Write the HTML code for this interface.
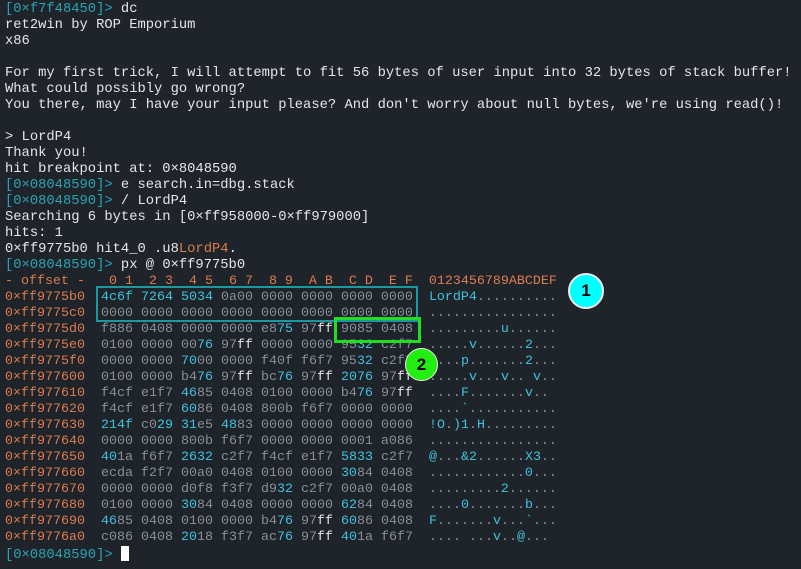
<!DOCTYPE html>
<html><head><meta charset="utf-8"><style>
html,body{margin:0;padding:0;background:#1f232a;width:801px;height:569px;overflow:hidden}
pre{margin:0;padding:2px 0 0 5px;font-family:"Liberation Mono","DejaVu Sans Mono",monospace;font-size:13.8px;line-height:16px;color:#e4e6ea;white-space:pre}
pre.h{padding-top:0;font-size:13.33px}
.c{color:#3cc4dc}.p{color:#2aa4b4}.g{color:#8a8f99}.w{color:#e4e6ea}.o{color:#d97d4e}
.box{position:absolute}
.cur{display:inline-block;width:8px;height:15px;background:#fff;vertical-align:-3px}
</style></head><body>
<pre><span class="p">[0×f7f48450]&gt;</span> dc
ret2win by ROP Emporium
x86

For my first trick, I will attempt to fit 56 bytes of user input into 32 bytes of stack buffer!
What could possibly go wrong?
You there, may I have your input please? And don't worry about null bytes, we're using read()!

&gt; LordP4
Thank you!
hit breakpoint at: 0×8048590
<span class="p">[0×08048590]&gt;</span> e search.in=dbg.stack
<span class="p">[0×08048590]&gt;</span> / LordP4
Searching 6 bytes in [0×ff958000-0×ff979000]
hits: 1
0×ff9775b0 hit4_0 .u8<span class="o">LordP4</span>.
<span class="p">[0×08048590]&gt;</span> px @ 0×ff9775b0</pre><pre class="h"><span class="o">- offset -   0 1  2 3  4 5  6 7  8 9  A B  C D  E F  0123456789ABCDEF</span>
<span class="o">0×ff9775b0</span>  <span class="c">4c6f 7264 5034</span> <span class="g">0a00 0000 0000 0000 0000</span>  <span class="c">LordP4</span><span class="g">..........</span>
<span class="o">0×ff9775c0</span>  <span class="g">0000 0000 0000 0000 0000 0000 0000 0000  ................</span>
<span class="o">0×ff9775d0</span>  <span class="g">f886 0408 0000 0000 e8</span><span class="c">75</span> <span class="g">97</span><span class="w">ff</span> <span class="g">9085 0408</span>  <span class="g">.........</span><span class="c">u</span><span class="g">......</span>
<span class="o">0×ff9775e0</span>  <span class="g">0100 0000 00</span><span class="c">76</span> <span class="g">97</span><span class="w">ff</span> <span class="g">0000 0000 95</span><span class="c">32</span> <span class="g">c2f7</span>  <span class="g">.....</span><span class="c">v</span><span class="g">......</span><span class="c">2</span><span class="g">...</span>
<span class="o">0×ff9775f0</span>  <span class="g">0000 0000</span> <span class="c">70</span><span class="g">00 0000 f40f f6f7 95</span><span class="c">32</span> <span class="g">c2f7</span>  <span class="g">....</span><span class="c">p</span><span class="g">.......</span><span class="c">2</span><span class="g">...</span>
<span class="o">0×ff977600</span>  <span class="g">0100 0000 b4</span><span class="c">76</span> <span class="g">97</span><span class="w">ff</span> <span class="g">bc</span><span class="c">76</span> <span class="g">97</span><span class="w">ff</span> <span class="c">2076</span> <span class="g">97</span><span class="w">ff</span>  <span class="g">.....</span><span class="c">v</span><span class="g">...</span><span class="c">v</span><span class="g">..</span> <span class="c">v</span><span class="g">..</span>
<span class="o">0×ff977610</span>  <span class="g">f4cf e1f7</span> <span class="c">46</span><span class="g">85 0408 0100 0000 b4</span><span class="c">76</span> <span class="g">97</span><span class="w">ff</span>  <span class="g">....</span><span class="c">F</span><span class="g">.......</span><span class="c">v</span><span class="g">..</span>
<span class="o">0×ff977620</span>  <span class="g">f4cf e1f7</span> <span class="c">60</span><span class="g">86 0408 800b f6f7 0000 0000</span>  <span class="g">....</span><span class="c">`</span><span class="g">...........</span>
<span class="o">0×ff977630</span>  <span class="c">214f</span> <span class="g">c0</span><span class="c">29 31</span><span class="g">e5</span> <span class="c">48</span><span class="g">83 0000 0000 0000 0000</span>  <span class="c">!O</span><span class="g">.</span><span class="c">)1</span><span class="g">.</span><span class="c">H</span><span class="g">.........</span>
<span class="o">0×ff977640</span>  <span class="g">0000 0000 800b f6f7 0000 0000 0001 a086  ................</span>
<span class="o">0×ff977650</span>  <span class="c">40</span><span class="g">1a f6f7</span> <span class="c">2632</span> <span class="g">c2f7 f4cf e1f7</span> <span class="c">5833</span> <span class="g">c2f7</span>  <span class="c">@</span><span class="g">...</span><span class="c">&amp;2</span><span class="g">......</span><span class="c">X3</span><span class="g">..</span>
<span class="o">0×ff977660</span>  <span class="g">ecda f2f7 00a0 0408 0100 0000</span> <span class="c">30</span><span class="g">84 0408</span>  <span class="g">............</span><span class="c">0</span><span class="g">...</span>
<span class="o">0×ff977670</span>  <span class="g">0000 0000 d0f8 f3f7 d9</span><span class="c">32</span> <span class="g">c2f7 00a0 0408</span>  <span class="g">.........</span><span class="c">2</span><span class="g">......</span>
<span class="o">0×ff977680</span>  <span class="g">0100 0000</span> <span class="c">30</span><span class="g">84 0408 0000 0000</span> <span class="c">62</span><span class="g">84 0408</span>  <span class="g">....</span><span class="c">0</span><span class="g">.......</span><span class="c">b</span><span class="g">...</span>
<span class="o">0×ff977690</span>  <span class="c">46</span><span class="g">85 0408 0100 0000 b4</span><span class="c">76</span> <span class="g">97</span><span class="w">ff</span> <span class="c">60</span><span class="g">86 0408</span>  <span class="c">F</span><span class="g">.......</span><span class="c">v</span><span class="g">...</span><span class="c">`</span><span class="g">...</span>
<span class="o">0×ff9776a0</span>  <span class="g">c086 0408</span> <span class="c">20</span><span class="g">18 f3f7 ac</span><span class="c">76</span> <span class="g">97</span><span class="w">ff</span> <span class="c">40</span><span class="g">1a f6f7</span>  <span class="g">....</span> <span class="g">...</span><span class="c">v</span><span class="g">..</span><span class="c">@</span><span class="g">...</span></pre><pre style="padding-top:0"><span class="p">[0×08048590]&gt;</span> <span class="cur"></span></pre>
<div class="box" style="left:96px;top:286px;width:318px;height:32px;border:2px solid #1a9aa0"></div>
<div class="box" style="left:334px;top:317px;width:81px;height:20px;border:3px solid #22dd22"></div>
<div class="box" style="left:568px;top:273px;width:32px;height:32px;border-radius:50%;background:#00ffff;border:2px solid #eee;font:bold 17px 'Liberation Sans',sans-serif;color:#000;text-align:center;line-height:32px">1</div>
<div class="box" style="left:405px;top:348px;width:31px;height:31px;border-radius:50%;background:#22ee11;border:1px solid #eee;font:bold 17px 'Liberation Sans',sans-serif;color:#000;text-align:center;line-height:31px">2</div>
</body></html>
